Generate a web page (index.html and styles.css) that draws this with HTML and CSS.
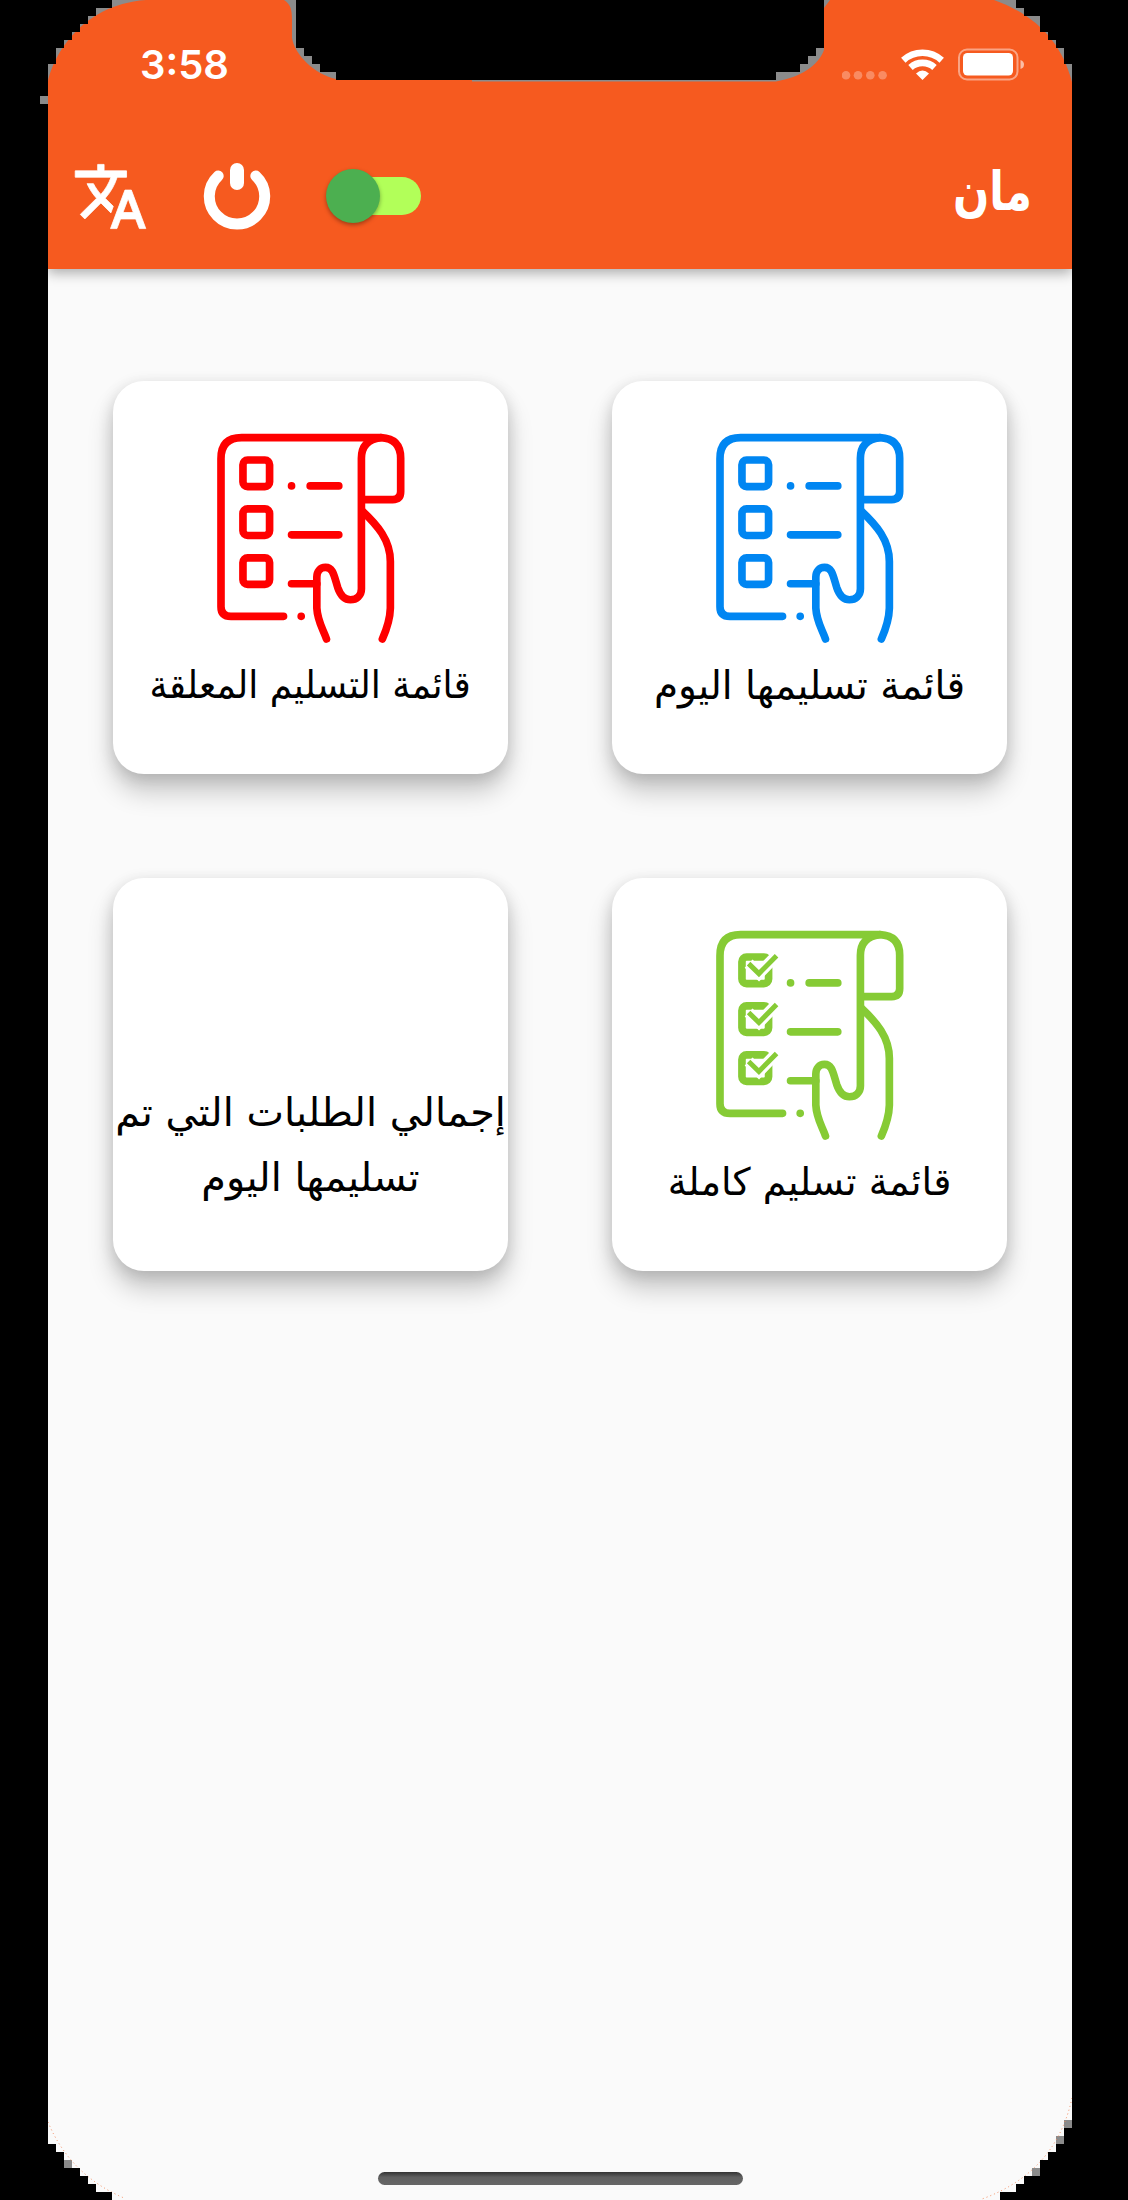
FILE: index.html
```html
<!DOCTYPE html>
<html lang="ar" dir="rtl">
<head>
<meta charset="utf-8">
<title>مان</title>
<link rel="stylesheet" href="styles.css">
</head>
<body>
<svg class="defs" width="0" height="0" aria-hidden="true">
  <symbol id="sheet" viewBox="379 220 565 632">
    <g fill="none" stroke="currentColor" stroke-width="23" stroke-linecap="round" stroke-linejoin="round">
      <path d="M579 770H421Q391 770 391 741V296Q391 233 453 233H872Q931 236 931 295V395Q931 419 907 419H815"/>
      <path d="M870 233Q813 240 813 295V688C813 708 798 720 780 720C759 720 749 704 742 684C730 645 728 623 705 623C689 623 679 635 679 652V745C681 785 697 807 708 838"/>
      <path d="M815 453C860 495 900 540 900 605V745C899 785 886 815 876 838"/>
      <path d="M659 378H745M603 525H745M603 672H679M603 378h.1M632 770h.1"/>
    </g>
  </symbol>
  <symbol id="boxes" viewBox="379 220 565 632">
    <g fill="none" stroke="currentColor" stroke-width="23">
      <rect x="457" y="300" width="80" height="80" rx="14"/>
      <rect x="457" y="447" width="80" height="80" rx="14"/>
      <rect x="457" y="594" width="80" height="80" rx="14"/>
    </g>
  </symbol>
  <symbol id="checks" viewBox="379 220 565 632">
    <g fill="none" stroke="#fff" stroke-width="34">
      <path d="M477 320L508 350L570 286M477 467L508 497L570 433M477 614L508 644L570 580"/>
    </g>
    <g fill="none" stroke="currentColor" stroke-width="15">
      <path d="M477 320L508 350L561 296M477 467L508 497L561 443M477 614L508 644L561 590"/>
    </g>
  </symbol>
</svg>

<div class="phone">
  <header class="header">
    <div class="status" dir="ltr">
      <span class="time">3:58</span>
      <svg class="signals" width="184" height="36" viewBox="842 46 184 36">
        <g fill="#fff" fill-opacity=".3"><circle cx="846" cy="75.3" r="4.3"/><circle cx="858" cy="75.3" r="4.3"/><circle cx="870.3" cy="75.3" r="4.3"/><circle cx="882.6" cy="75.3" r="4.3"/></g>
        <g fill="none" stroke="#fff" stroke-width="6.6"><path d="M903.3 60.2A28.500 28.500 0 0 1 941.700 60.200"/><path d="M910.500 67.500A18 18 0 0 1 934.500 67.500"/></g>
        <path fill="#fff" d="M916 73.500Q922.500 67.500 929 73.500L922.500 80Z"/>
        <rect x="959" y="49.500" width="58.500" height="30" rx="8" fill="none" stroke="#fff" stroke-opacity=".45" stroke-width="2"/>
        <rect x="963" y="53" width="50" height="22.500" rx="4.500" fill="#fff"/>
        <path fill="#fff" fill-opacity=".6" d="M1020.500 60Q1024 61 1024 64.500T1020.500 69Z"/>
      </svg>
    </div>
    <div class="toolbar">
      <h1 class="title">مان</h1>
      <div class="actions" dir="ltr">
        <svg width="77" height="77" viewBox="0 0 24 24"><path fill="#fff" stroke="#fff" stroke-width=".25" d="M12.870 15.070l-2.540-2.510.030-.030c1.740-1.940 2.980-4.170 3.710-6.530H17V4h-7V2H8v2H1v1.990h11.170C11.500 7.920 10.440 9.750 9 11.350 8.070 10.320 7.300 9.190 6.690 8h-2c.730 1.630 1.730 3.170 2.980 4.560l-5.090 5.020L4 19l5-5 3.110 3.110.760-2.040zM18.500 10h-2L12 22h2l1.120-3h4.750L21 22h2l-4.500-12zm-2.620 7l1.620-4.330L19.120 17h-3.240z"/></svg>
        <svg class="power" width="68" height="68" viewBox="203 162 68 68" fill="none" stroke="#fff" stroke-linecap="round"><path stroke-width="11" d="M218.200 176A27.700 27.700 0 1 0 255.800 176"/><path stroke-width="14" d="M237 170V183"/></svg>
        <div class="switch"><span class="thumb"></span></div>
      </div>
    </div>
  </header>

  <main class="grid">
    <section class="card today">
      <svg class="icon" width="188" height="211"><use href="#sheet"/><use href="#boxes"/></svg>
      <p class="label">قائمة تسليمها اليوم</p>
    </section>
    <section class="card pending">
      <svg class="icon" width="188" height="211"><use href="#sheet"/><use href="#boxes"/></svg>
      <p class="label">قائمة التسليم المعلقة</p>
    </section>
    <section class="card complete">
      <svg class="icon" width="188" height="211"><use href="#sheet"/><use href="#boxes"/><use href="#checks"/></svg>
      <p class="label">قائمة تسليم كاملة</p>
    </section>
    <section class="card total">
      <p class="label">إجمالي الطلبات التي تم<br>تسليمها اليوم</p>
    </section>
  </main>
  <div class="home"></div>
</div>

<svg class="bezel" width="1128" height="2200" viewBox="0 0 1128 2200" aria-hidden="true">
  <g fill="#8b8b8b">
    <path d="M40 96h8v8h-8zM48 82C52 60 78 5 146 0H48Z"/>
    <path d="M284 0C290 4 292 8 292 20V38C295 55 314 74 336 79V80H472V81.500H776C801 77 818 66 824 50V8L830 0Z"/>
    <path d="M994 0C1036 15 1062 43 1072 82V0Z"/>
    <path d="M64 2160h8v8h-8zM1064 2120h8v8h-8zM1056 2136h8v8h-8zM1032 2168h8v8h-8z"/>
  </g>
  <g fill="none" stroke="#f58a5c" stroke-dasharray="1 3">
    <path d="M48 2122Q70 2175 124 2198M1072 2098Q1056 2172 982 2199"/>
  </g>
  <g fill="#000" shape-rendering="crispEdges">
    <path d="M0 0H112V8H96V16H88V24H80V32H72V40H64V48H56V64H48V96H40V104H48V2144H56V2152H64V2168H80V2176H88V2184H96V2192H112V2200H0Z"/>
    <path d="M296 0H824V48H816V56H808V64H800V72H776V80H336V72H320V64H312V56H304V48H296Z"/>
    <path d="M1128 0H1016V8H1024V16H1040V32H1048V40H1056V48H1064V64H1072V2128H1064V2144H1056V2152H1048V2160H1040V2176H1024V2184H1016V2192H1000V2200H1128Z"/>
  </g>
</svg>
</body>
</html>
```
FILE: styles.css
```css
* { box-sizing: border-box; }

body {
  margin: 0;
  background: #000;
  font-family: "DejaVu Sans", sans-serif;
}

.defs { position: absolute; }

.phone {
  display: flex;
  flex-direction: column;
  width: 1024px;
  height: 2200px;
  margin: 0 56px 0 48px;
  background: #fafafa;
}

.header {
  height: 268.500px;
  background: #f65a1f;
  box-shadow: 0 4px 12px rgba(0, 0, 0, .32);
}

.status {
  display: flex;
  justify-content: space-between;
  align-items: center;
  height: 128px;
  padding: 0 46px 0 92px;
}

.time {
  padding-top: 2px;
  color: #fff;
  font: 600 40px/1 Inter, sans-serif;
}

.toolbar {
  display: flex;
  justify-content: space-between;
  align-items: center;
  height: 136px;
  padding: 0 40px 0 24px;
}

.title {
  margin: 0;
  padding-bottom: 8px;
  color: #fff;
  font-size: 54px;
  line-height: 1;
  transform: scaleX(.79);
  transform-origin: right;
}

.actions {
  display: flex;
  align-items: center;
}

.power { margin: 0 58px 0 54px; }

.switch {
  display: flex;
  align-items: center;
  width: 92px;
  height: 38px;
  border-radius: 19px;
  background: #b2ff59;
}

.thumb {
  flex: none;
  width: 54px;
  height: 54px;
  margin-left: -3px;
  border-radius: 50%;
  background: #4caf50;
  box-shadow: 0 2px 4px rgba(0, 0, 0, .35);
}

.grid {
  display: grid;
  grid-template-columns: 395px 395px;
  grid-auto-rows: 393px;
  gap: 103.500px 104px;
  padding: 112.500px 65px 0;
}

.card {
  display: flex;
  flex-direction: column;
  align-items: center;
  padding-top: 52px;
  border-radius: 31px;
  background: #fff;
  box-shadow: 0 18px 26px rgba(0, 0, 0, .2), 0 4px 16px rgba(0, 0, 0, .14);
}

.icon { flex: none; }

.today { color: #0086f2; }
.pending { color: #f00; }
.complete { color: #86cb35; }

.label {
  margin: 9px 0 0;
  color: #000;
  font-size: 38px;
  line-height: 65.500px;
  text-align: center;
  white-space: nowrap;
}

.today .label { font-size: 39px; }
.pending .label { transform: scaleX(.95); }

.total .label {
  margin-top: 150px;
  font-size: 39.800px;
}

.home {
  width: 365px;
  height: 13px;
  margin: auto 329px 15px auto;
  border-radius: 7px;
  background: linear-gradient(#333, #606060 40%, #666);
}

.bezel {
  position: absolute;
  top: 0;
  left: 0;
}
```
